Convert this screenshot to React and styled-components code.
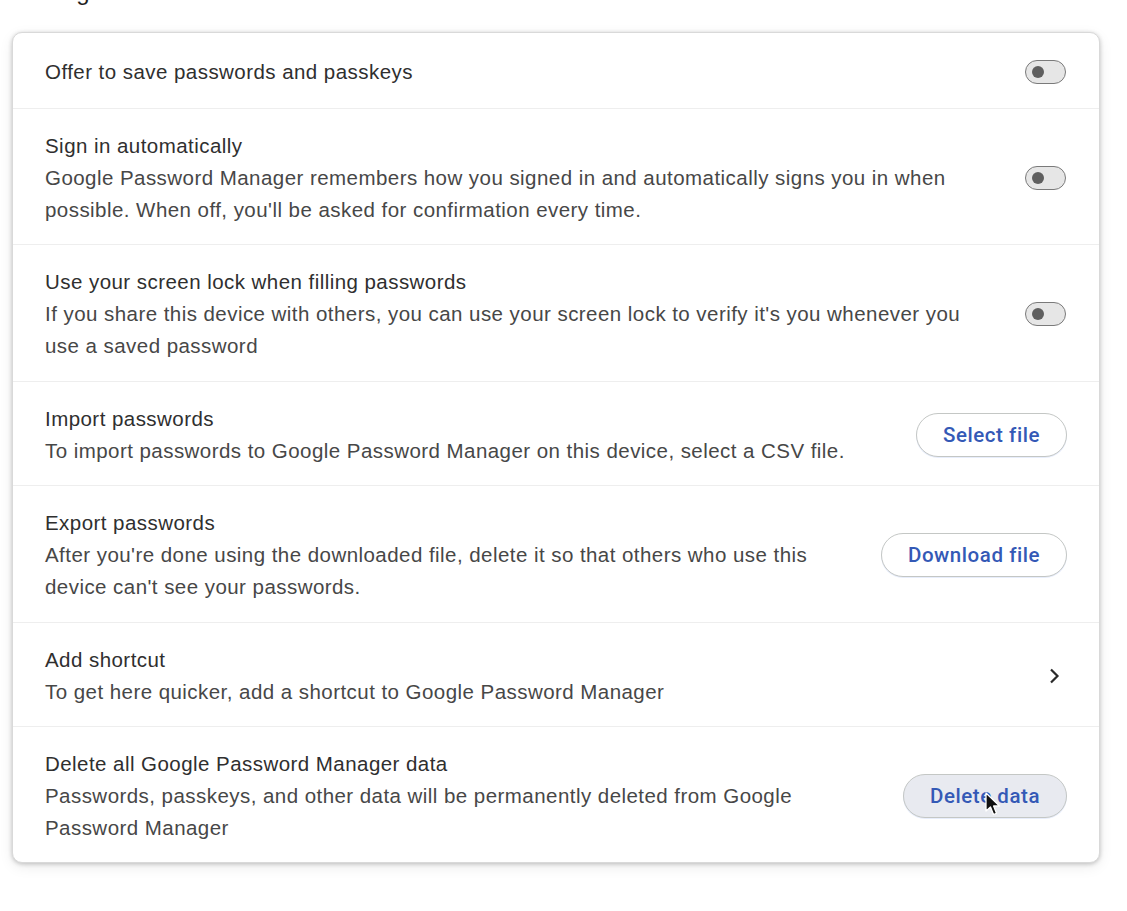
import React from 'react';
import styled, { createGlobalStyle } from 'styled-components';

const GlobalStyle = createGlobalStyle`
  html, body {
    margin: 0;
    padding: 0;
    background: #ffffff;
    font-family: "Liberation Sans", Arial, sans-serif;
    -webkit-font-smoothing: antialiased;
  }
`;

const Page = styled.div`
  padding: 0 27px 40px 12px;
  overflow: hidden;
`;

const Heading = styled.h1`
  margin: -22px 0 26px 3px;
  font-size: 24px;
  line-height: 28px;
  font-weight: 400;
  color: #1f1f1f;
`;

const Card = styled.section`
  background: #fff;
  border-radius: 10px;
  border: 1px solid #d9d9d9;
  box-shadow: 0 1px 4px rgba(0, 0, 0, 0.22), 0 4px 14px rgba(0, 0, 0, 0.08);
  overflow: hidden;
`;

const Row = styled.div`
  display: flex;
  align-items: center;
  gap: 30px;
  min-height: 75px;
  padding: 21px 32px 18.4px 32px;
  box-sizing: border-box;
  border-top: ${(p) => (p.$first ? 'none' : '1px solid #eeeeee')};
`;

const TextCol = styled.div`
  flex: 1;
  min-width: 0;
  font-size: 20.5px;
  letter-spacing: 0.45px;
  line-height: 32px;
  color: #444746;
`;

const Title = styled.div`
  color: #2f2f2f;
`;

const Desc = styled.div`
  color: #474747;
`;

const Toggle = styled.div`
  flex: none;
  width: 41px;
  height: 24px;
  border-radius: 12px;
  border: 1.5px solid #7a7a7a;
  background: #e6e6e6;
  display: flex;
  align-items: center;
  padding-left: 6px;
  box-sizing: border-box;
  margin-right: 1px;
`;

const Knob = styled.span`
  width: 12px;
  height: 12px;
  border-radius: 50%;
  background: #5f5f5f;
`;

const PillButton = styled.button`
  flex: none;
  position: relative;
  height: 44px;
  padding: 0 26px;
  border-radius: 22px;
  border: 1px solid #c4c7c5;
  background: ${(p) => (p.$hover ? '#e8eaf0' : '#ffffff')};
  color: #3459b6;
  font-family: Roboto, "Liberation Sans", Arial, sans-serif;
  font-size: 20.5px;
  font-weight: 500;
  letter-spacing: 0.55px;
  cursor: pointer;
  box-shadow: 0 1px 0 rgba(60, 110, 220, 0.12);
`;

const Chevron = styled.svg`
  flex: none;
  width: 24px;
  height: 24px;
  margin-right: 1px;
`;

const Cursor = styled.svg`
  position: absolute;
  left: 81px;
  top: 17px;
  width: 16px;
  height: 26px;
  pointer-events: none;
`;

const rows = [
  { title: 'Offer to save passwords and passkeys', control: 'toggle' },
  {
    title: 'Sign in automatically',
    desc: "Google Password Manager remembers how you signed in and automatically signs you in when possible. When off, you'll be asked for confirmation every time.",
    control: 'toggle',
  },
  {
    title: 'Use your screen lock when filling passwords',
    desc: "If you share this device with others, you can use your screen lock to verify it's you whenever you use a saved password",
    control: 'toggle',
  },
  {
    title: 'Import passwords',
    desc: 'To import passwords to Google Password Manager on this device, select a CSV file.',
    control: 'button',
    label: 'Select file',
  },
  {
    title: 'Export passwords',
    desc: "After you're done using the downloaded file, delete it so that others who use this device can't see your passwords.",
    control: 'button',
    label: 'Download file',
  },
  {
    title: 'Add shortcut',
    desc: 'To get here quicker, add a shortcut to Google Password Manager',
    control: 'chevron',
  },
  {
    title: 'Delete all Google Password Manager data',
    desc: 'Passwords, passkeys, and other data will be permanently deleted from Google Password Manager',
    control: 'button',
    label: 'Delete data',
    hover: true,
  },
];

function Control({ row }) {
  if (row.control === 'toggle') {
    return (
      <Toggle>
        <Knob />
      </Toggle>
    );
  }
  if (row.control === 'chevron') {
    return (
      <Chevron viewBox="0 0 24 24">
        <path d="M9 5.5 L15.5 12 L9 18.5" fill="none" stroke="#2a2a2a" strokeWidth="2.2" />
      </Chevron>
    );
  }
  return (
    <PillButton type="button" $hover={row.hover}>
      {row.label}
      {row.hover && (
        <Cursor viewBox="0 0 16 26">
          <path
            d="M1 1 L1 19 L5.5 15 L8.5 22.5 L11.5 21.3 L8.6 14 L14.5 14 Z"
            fill="#111"
            stroke="#fff"
            strokeWidth="1.3"
            strokeLinejoin="round"
          />
        </Cursor>
      )}
    </PillButton>
  );
}

export default function App() {
  return (
    <>
      <GlobalStyle />
      <Page>
        <Heading>Settings</Heading>
        <Card>
          {rows.map((row, i) => (
            <Row key={row.title} $first={i === 0}>
              <TextCol>
                <Title>{row.title}</Title>
                {row.desc && <Desc>{row.desc}</Desc>}
              </TextCol>
              <Control row={row} />
            </Row>
          ))}
        </Card>
      </Page>
    </>
  );
}
